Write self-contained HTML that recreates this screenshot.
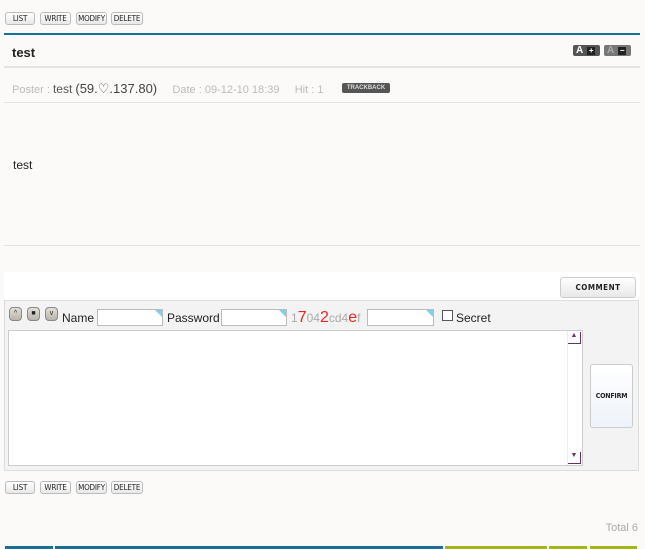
<!DOCTYPE html>
<html><head><meta charset="utf-8"><style>
*{margin:0;padding:0;box-sizing:border-box}
body{width:645px;height:549px;background:#fbfaf8;font-family:"Liberation Sans",sans-serif;position:relative;overflow:hidden;color:#222}
.a{position:absolute}
.btn{position:absolute;height:13px;border:1px solid #bbb;border-radius:3px;background:linear-gradient(#fff,#e8e8e8);font:8px "DejaVu Sans Condensed","Liberation Sans",sans-serif;color:#222;text-align:center;line-height:11px;letter-spacing:-0.2px}
.inp{position:absolute;height:17px;background:#fff;border:1px solid #bbb}
.inp:after{content:"";position:absolute;right:0;top:0;border-top:7px solid #7fd0e8;border-left:7px solid transparent}
.hl{position:absolute;left:4px;width:636px;height:2px;background:#e4e4e4}
.ar{position:absolute;top:307px;width:13px;height:14px;background:linear-gradient(#e4e0d8,#b8b4ac);border:1px solid #888;border-radius:4px;font-size:7px;text-align:center;line-height:11px}
</style></head><body>
<div class="btn" style="left:5px;top:12px;width:30px">LIST</div>
<div class="btn" style="left:40px;top:12px;width:31px">WRITE</div>
<div class="btn" style="left:76px;top:12px;width:31px">MODIFY</div>
<div class="btn" style="left:111px;top:12px;width:32px">DELETE</div>
<div class="a" style="left:4px;top:33px;width:636px;height:2px;background:#1a6f9a"></div>
<div class="a" style="left:12px;top:45px;font-weight:bold;font-size:13px">test</div>
<div class="a" style="left:573px;top:45px;width:27px;height:11px;background:#555;border-radius:2px;color:#fff;font:bold 10px sans-serif;line-height:11px;padding-left:3px">A<span style="display:inline-block;width:8px;height:8px;background:#222;margin-left:4px;font-size:8px;line-height:8px;text-align:center">+</span></div>
<div class="a" style="left:604px;top:45px;width:27px;height:11px;background:#777;border-radius:2px;color:#aaa;font:bold 10px sans-serif;line-height:11px;padding-left:3px">A<span style="display:inline-block;width:8px;height:8px;background:#222;color:#fff;margin-left:4px;font-size:8px;line-height:8px;text-align:center">−</span></div>
<div class="hl" style="top:66px"></div>
<div class="a" style="left:12px;top:81px;font-size:11px;color:#bbb;white-space:nowrap">Poster : <span style="color:#555;font-size:12px">test</span> <span style="color:#444;font-size:13px">(59.♡.137.80)</span>&nbsp;&nbsp;&nbsp;&nbsp; Date : 09-12-10 18:39 &nbsp;&nbsp;&nbsp; Hit : 1</div>
<div class="a" style="left:342px;top:83px;width:48px;height:10px;background:#555;border-radius:2px;color:#ddd;font:bold 6px sans-serif;line-height:10px;text-align:center">TRACKBACK</div>
<div class="hl" style="top:102px;height:1px"></div>
<div class="a" style="left:13px;top:158px;font-size:12px">test</div>
<div class="hl" style="top:245px;height:1px"></div>
<div class="a" style="left:4px;top:272px;width:636px;height:28px;background:#fff"></div>
<div class="btn" style="left:560px;top:277px;width:76px;height:21px;line-height:19px;border-color:#ccc;font-size:8px;font-weight:bold;letter-spacing:0.5px">COMMENT</div>
<div class="a" style="left:4px;top:300px;width:635px;height:171px;background:#f3f3f3;border:1px solid #ddd"></div>
<div class="ar" style="left:9px">^</div>
<div class="ar" style="left:27px">■</div>
<div class="ar" style="left:45px">v</div>
<div class="a" style="left:62px;top:311px;font-size:12px">Name</div>
<div class="inp" style="left:97px;top:309px;width:66px"></div>
<div class="a" style="left:167px;top:311px;font-size:12px">Password</div>
<div class="inp" style="left:221px;top:309px;width:66px"></div>
<div class="a" style="left:291px;top:309px;font-size:12px;color:#aaa;white-space:nowrap">1<span style="color:#e22;font-size:16px">7</span>04<span style="color:#e22;font-size:16px">2</span>cd4<span style="color:#e22;font-size:16px">e</span>f</div>
<div class="inp" style="left:367px;top:309px;width:67px"></div>
<div class="a" style="left:442px;top:310px;width:11px;height:11px;border:1px solid #555;background:#fff"></div>
<div class="a" style="left:456px;top:311px;font-size:12px">Secret</div>
<div class="a" style="left:8px;top:330px;width:575px;height:136px;background:#fff;border:1px solid #ccc"></div>
<div class="a" style="left:567px;top:331px;width:15px;height:134px;background:#fff;border-left:1px solid #eee"></div>
<div class="a" style="left:568px;top:332px;width:13px;height:12px;border-right:1px solid #636;border-bottom:1px solid #636;font-size:7px;text-align:center;color:#636">▲</div>
<div class="a" style="left:568px;top:452px;width:13px;height:12px;border-right:1px solid #636;border-bottom:1px solid #636;font-size:7px;text-align:center;color:#636">▼</div>
<div class="btn" style="left:590px;top:364px;width:43px;height:64px;line-height:62px;background:linear-gradient(#fff,#eef3fa);border-color:#ccc;font-size:7px;font-weight:bold">CONFIRM</div>
<div class="btn" style="left:5px;top:481px;width:30px">LIST</div>
<div class="btn" style="left:40px;top:481px;width:31px">WRITE</div>
<div class="btn" style="left:76px;top:481px;width:31px">MODIFY</div>
<div class="btn" style="left:111px;top:481px;width:32px">DELETE</div>
<div class="a" style="right:7px;top:522px;font-size:11px;color:#aaa">Total 6</div>
<div class="a" style="left:5px;top:546px;width:48px;height:3px;background:#1a6f9a"></div>
<div class="a" style="left:55px;top:546px;width:388px;height:3px;background:#1a6f9a"></div>
<div class="a" style="left:445px;top:546px;width:102px;height:3px;background:#a3b71a"></div>
<div class="a" style="left:549px;top:546px;width:38px;height:3px;background:#a3b71a"></div>
<div class="a" style="left:590px;top:546px;width:47px;height:3px;background:#a3b71a"></div>
</body></html>
